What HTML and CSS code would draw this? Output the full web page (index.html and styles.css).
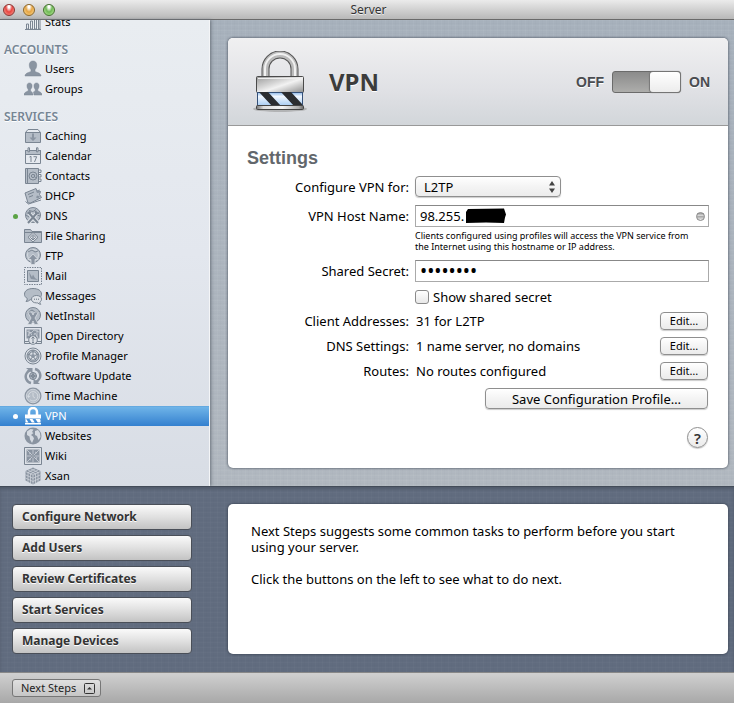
FILE: index.html
```html
<!DOCTYPE html>
<html lang="en">
<head>
    <meta charset="UTF-8">
    <meta name="viewport" content="width=device-width, initial-scale=1.0">
    <title>Server</title>
    <link rel="stylesheet" href="styles.css">
</head>
<body>
    <header class="titlebar">
        <div class="lights">
            <button class="light red" type="button" aria-label="Close"></button>
            <button class="light yellow" type="button" aria-label="Minimize"></button>
            <button class="light green" type="button" aria-label="Zoom"></button>
        </div>
        <h1>Server</h1>
    </header>

    <div class="main">
        <nav class="sidebar">
            <a class="item" href="#"><svg class="icon" viewBox="0 0 18 18"><path d="M1 16.5h16M2.500 16v-5h2v5zM6.500 16V8h2v8zM10.500 16V5h2v11zM14.500 16V2h1.500v14z"/></svg>Stats</a>
            <h2>ACCOUNTS</h2>
            <a class="item" href="#"><svg class="icon solid" viewBox="0 0 18 18"><path d="M9 1C6.500 1 5.200 2.700 5.300 5c0 2 .7 3.700 1.700 4.700v1.500c-.6 1.200-6 1.400-6 4.800h16c0-3.400-5.400-3.600-6-4.800V9.700c1-1 1.700-2.700 1.700-4.700C12.800 2.700 11.500 1 9 1z"/></svg>Users</a>
            <a class="item" href="#"><svg class="icon solid" viewBox="0 0 18 18"><path d="M5.500 3C3.700 3 3 4.300 3 6c0 1.500.5 2.500 1.200 3.200v1.500C3.700 11.600 0 11.800 0 15h9c0-2-1-3-2-3.600-.3-.3-.4-.5-.4-.7V9.200C7.500 8.500 8 7.500 8 6c0-1.700-.7-3-2.500-3z"/><path d="M12.500 3C10.700 3 10 4.300 10 6c0 1.500.5 2.500 1.200 3.200v1.500c-.2.500-1.200.8-1.700 1.200 0 .8.500 1.400.5 3.100h8c0-3.200-3.700-3.400-4.200-4.300V9.200C14.500 8.500 15 7.500 15 6c0-1.700-.7-3-2.500-3z"/></svg>Groups</a>
            <h2>SERVICES</h2>
            <a class="item" href="#"><svg class="icon" viewBox="0 0 18 18"><path class="fill" d="M1.500 5.500h15v10h-15z"/><path d="M1.500 5.500l2.500-3h10l2.500 3"/><path class="dark" d="M8 6.500h2v4h2.500L9 14l-3.500-3.500H8z"/></svg>Caching</a>
            <a class="item" href="#"><svg class="icon" viewBox="0 0 18 18"><path class="fill" d="M1.500 3.500h15v4h-15z"/><path d="M1.500 3.500h15v13h-15zM1.500 7.500h15"/><path class="paper" d="M4 .8h1.500v4H4zM12.500.8H14v4h-1.500z"/><path d="M5.500 10l1.500-.7V15M9.500 9.700h3.200L10.500 15"/></svg>Calendar</a>
            <a class="item" href="#"><svg class="icon" viewBox="0 0 18 18"><path class="fill" d="M1.500 1.500h13v15h-13z"/><path d="M3.500 1.500v15M14.500 3H17v2.500h-2.500M14.500 7.500H17V10h-2.500M14.500 12H17v2.500h-2.500"/><circle cx="9" cy="9" r="4"/><circle cx="9" cy="9" r="1.600"/><path d="M10.600 7.500v2.500q1 1.300 2.200 0"/></svg>Contacts</a>
            <a class="item" href="#"><svg class="icon" viewBox="0 0 18 18"><path class="fill" d="M1 6l11-4.500 1.500 3.500 3-.5-1 3 2 3-11 5.500H4z"/><path d="M1.500 14.500l3 2.500L17 13"/><path class="dark" d="M12 3.500l4-1-1 3-2 .5zM13 8.500l3 1-2 2-2-1z"/><path d="M4 7.500l6-2.500M5 10l4-1.500"/></svg>DHCP</a>
            <a class="item" href="#"><span class="dot"></span><svg class="icon" viewBox="0 0 18 18"><circle class="fill" cx="9" cy="8" r="7.500"/><path d="M5 3.500l4 1 3-2M2 8l3 2M13 8l3 1"/><path class="tool halo" d="M4 16l9-10M14 16L5 6"/><path class="tool" d="M4 16l9-10M14 16L5 6"/><path class="tool" d="M3.500 5.500l2 .8.800-2M11.500 4l.8 2.500 2.500-.5"/></svg>DNS</a>
            <a class="item" href="#"><svg class="icon" viewBox="0 0 18 18"><path class="fill" d="M.5 15.500v-13h6l1.500 2h9.500v11z"/><path d="M.5 5.500h17"/><path class="paper" d="M9 5.500l5 4.800-5 4.700-5-4.700z"/><path d="M9 7.500l2.700 2.800L9 13l-2.700-2.700z"/><path class="dark" d="M8.300 8.500h1.400V12H8.300z"/></svg>File Sharing</a>
            <a class="item" href="#"><svg class="icon" viewBox="0 0 18 18"><circle class="fill" cx="9" cy="8" r="7.500"/><circle class="edge" cx="9" cy="8" r="5.500"/><path d="M4 5l4-2 3 2 3-1"/><path class="dark edge" d="M7 17.500v-5H4L9 7l5 5.500h-3v5z"/></svg>FTP</a>
            <a class="item" href="#"><svg class="icon" viewBox="0 0 18 18"><path class="stamp" d="M.5.5h17v17H.5z"/><path class="fill" d="M3.500 3.500h11v11h-11z"/><path class="dark" d="M5 5l3 5 1-2.500 2 3.500 3 2-7-1-1-2z"/></svg>Mail</a>
            <a class="item" href="#"><svg class="icon" viewBox="0 0 18 18"><path class="fill" d="M9 1.500c5 0 8.500 2.200 8.500 5.700S14 13 9 13c-1 0-2-.1-2.800-.3Q4.500 14.500 2 14.500q1.500-1.500 1.300-3C1.500 10.500.5 9 .5 7.200.5 3.700 4 1.500 9 1.500z"/><path class="paper" d="M12.500 8.500c3 0 5 1.500 5 3.700 0 1.300-.7 2.300-1.700 2.900q0 1.200 1 2.200-2 0-3-1.400h-1.300c-3 0-5-1.500-5-3.700s2-3.700 5-3.700z"/><path class="dots" d="M10 12.200h1M12 12.200h1M14 12.200h1"/></svg>Messages</a>
            <a class="item" href="#"><svg class="icon" viewBox="0 0 18 18"><circle class="fill" cx="9" cy="8" r="7.500"/><path d="M3 6l5-3 3 2 4 0"/><path class="dark edge" d="M3.500 5h4L9 8l1.500-3h4L11 11l3.500 6.500h-4L9 14l-1.500 3.500h-4L7 11z"/></svg>NetInstall</a>
            <a class="item" href="#"><svg class="icon" viewBox="0 0 18 18"><path d="M.5.5h17v16H.5zM.5 14.500h17"/><path class="dark" d="M2.500 2.500h13v9h-13z"/><path class="scratch" d="M3 4l4 2 3-3 5 2M4 9l2-4 3 5 2-4 3 5M13 3v7M5 3v6"/><circle class="paper" cx="9" cy="13" r="4.300"/><path d="M9 10.200v4.600M7.500 11.500L9 10l1.500 1.500M8 15.500h2"/></svg>Open Directory</a>
            <a class="item" href="#"><svg class="icon" viewBox="0 0 18 18"><circle cx="9" cy="9" r="8"/><circle class="fill" cx="9" cy="9" r="6"/><circle class="paper" cx="9" cy="9" r="4.200"/><circle class="dark" cx="9" cy="9" r="2"/><path d="M9 3v4M4 7l3 1.500M14 7l-3 1.500M5.500 14L8 10.500M12.500 14L10 10.500"/></svg>Profile Manager</a>
            <a class="item" href="#"><svg class="icon" viewBox="0 0 18 18"><path class="ring" d="M7 16C2.500 15 .5 10 2.500 6.500 3.500 4.700 5 3.500 6 3.200M11 2c4.500 1 6.500 6 4.500 9.500-1 1.800-2.500 3-3.500 3.300"/><path class="dark" d="M2 1h6.500v5.500L6.500 4.700zM16 17H9.500v-5.500l2 1.800z"/><circle class="fill" cx="9" cy="9" r="3.500"/><circle cx="9" cy="9" r="1.500"/><path d="M9 5.500v7M5.500 9h7"/></svg>Software Update</a>
            <a class="item" href="#"><svg class="icon" viewBox="0 0 18 18"><circle class="dark" cx="9" cy="9" r="8.500"/><circle class="fill edge" cx="9" cy="9" r="6.800"/><path class="edge" d="M4.500 10a4.700 4.700 0 1 1 1.500 2.800M3.200 8.500l1.400 2 1.700-1.700M9 6v3.500l2 1.500"/></svg>Time Machine</a>
            <a class="item active" href="#"><span class="dot"></span><svg class="icon" viewBox="0 0 18 18"><path class="shackle" d="M5 8V5a4 4 0 0 1 8 0v3"/><path class="white" d="M1 7.500h16v4H1zM1 16h16v1.500H1zM1.500 12v3.500h3L2.200 12zM5.500 12l2.300 3.500h3L8.500 12zM11.500 12l2.300 3.500h2.700V13l-.7-1z"/></svg>VPN</a>
            <a class="item" href="#"><svg class="icon" viewBox="0 0 18 18"><circle class="dark" cx="9" cy="9" r="8.500"/><path class="land" d="M3 4.500L6.500 2l3 .5L8 5l1.500 1L7 8l2 1.500 1 2-2 4.500-2-3.500-.5-3L3 8zM11 4l3-1 2 3 .5 4-2 3-1.500-4-2-1z"/></svg>Websites</a>
            <a class="item" href="#"><svg class="icon" viewBox="0 0 18 18"><path class="paper" d="M.5.500h17v17H.5z"/><path class="dark" d="M2.500 2.500h13v13h-13z"/><path class="scratch" d="M3 3l12 12M15 3L3 15M9 3v12M3 9h12M5 7l2-1M11 5l2 1M5 12l2 1M12 12l1-2"/><circle class="paper" cx="9" cy="9" r="1.200"/></svg>Wiki</a>
            <a class="item" href="#"><svg class="icon" viewBox="0 0 18 18"><path class="dark" d="M9 .500L16.500 4v9.500L9 17.500l-7.500-4V4z"/><path class="scratch" d="M1.500 4.500L9 8l7.500-3.500M1.500 7.800L9 11.300l7.500-3.500M1.500 11L9 14.500l7.500-3.500M9 8v9.500M4 5v10M6.500 6.500v10M11.500 6.500v10M14 5v10M4 3l7.500 4M6.500 1.700L14 5.500M14 3L6.500 7M11.500 1.700L4 5.500"/></svg>Xsan</a>
        </nav>

        <main class="content">
            <section class="card">
                <div class="card-header">
                    <svg class="lock" viewBox="0 0 56 62">
                        <defs>
                            <linearGradient id="steel" x1="0" y1="0" x2="1" y2="0">
                                <stop offset="0" stop-color="#777"/>
                                <stop offset=".15" stop-color="#ddd"/>
                                <stop offset=".55" stop-color="#f4f4f4"/>
                                <stop offset=".9" stop-color="#aaa"/>
                                <stop offset="1" stop-color="#666"/>
                            </linearGradient>
                            <linearGradient id="body" x1="0" y1="0" x2="1" y2="1">
                                <stop offset="0" stop-color="#999"/>
                                <stop offset=".4" stop-color="#d8d8d8"/>
                                <stop offset=".55" stop-color="#f2f2f2"/>
                                <stop offset="1" stop-color="#8e8e8e"/>
                            </linearGradient>
                            <linearGradient id="glass" x1="0" y1="0" x2="0" y2="1">
                                <stop offset="0" stop-color="#8db8e8"/>
                                <stop offset=".3" stop-color="#f2f8ff"/>
                                <stop offset="1" stop-color="#a9cdf3"/>
                            </linearGradient>
                        </defs>
                        <ellipse cx="28" cy="58" rx="27" ry="3" fill="#999" opacity=".6"/>
                        <path d="M13.500 27V18a14.500 14.500 0 0 1 29 0v9" fill="none" stroke="#555" stroke-width="8"/>
                        <path d="M13.500 27V18a14.500 14.500 0 0 1 29 0v9" fill="none" stroke="#bbb" stroke-width="6"/>
                        <path d="M13 27V18a15 15 0 0 1 30 0v9" fill="none" stroke="#f1f1f1" stroke-width="2"/>
                        <rect x="4.500" y="25.500" width="47" height="16" rx="1" fill="url(#body)" stroke="#4a4a4a"/>
                        <path d="M6 27.500h44" stroke="#eee"/>
                        <rect x="5.500" y="41.500" width="45" height="13" fill="url(#glass)" stroke="#345078"/>
                        <path d="M7 41h9l13 14h-9zM29 41h10l11 12v2h-8z" fill="#2b2d30"/>
                        <rect x="4.500" y="54.500" width="47" height="4" rx="1" fill="url(#steel)" stroke="#444"/>
                    </svg>
                    <h2>VPN</h2>
                    <label class="switch">
                        <span>OFF</span>
                        <input type="checkbox" role="switch" aria-label="VPN" checked>
                        <span>ON</span>
                    </label>
                </div>

                <form class="card-body">
                    <h3>Settings</h3>
                    <div class="fields">
                        <label for="protocol">Configure VPN for:</label>
                        <div class="select">
                            <select id="protocol">
                                <option>L2TP</option>
                            </select>
                            <svg class="arrows" viewBox="0 0 6 12"><path d="M3 0l3 4.500H0zM3 12l3-4.500H0z"/></svg>
                        </div>

                        <label for="host">VPN Host Name:</label>
                        <div>
                            <div class="host">
                                <input id="host" type="text" value="98.255.">
                                <svg class="redacted" viewBox="0 0 40 16"><path d="M2 1l36-.5 2 6-1 3-1 5.500-18-.5-20 .5V4z"/></svg>
                                <span class="status"></span>
                            </div>
                            <p class="note">Clients configured using profiles will access the VPN service from the Internet using this hostname or IP address.</p>
                        </div>

                        <label for="secret">Shared Secret:</label>
                        <input id="secret" type="password" value="password">

                        <label class="check"><input type="checkbox">Show shared secret</label>

                        <span class="name">Client Addresses:</span>
                        <div class="value">31 for L2TP <button class="btn small" type="button">Edit…</button></div>

                        <span class="name">DNS Settings:</span>
                        <div class="value">1 name server, no domains <button class="btn small" type="button">Edit…</button></div>

                        <span class="name">Routes:</span>
                        <div class="value">No routes configured <button class="btn small" type="button">Edit…</button></div>
                    </div>
                    <div class="actions">
                        <button class="btn save" type="button">Save Configuration Profile…</button>
                        <button class="btn help" type="button" aria-label="Help">?</button>
                    </div>
                </form>
            </section>
        </main>
    </div>

    <section class="steps">
        <div class="step-list">
            <button type="button">Configure Network</button>
            <button type="button">Add Users</button>
            <button type="button">Review Certificates</button>
            <button type="button">Start Services</button>
            <button type="button">Manage Devices</button>
        </div>
        <div class="step-text">
            <p>Next Steps suggests some common tasks to perform before you start using your server.</p>
            <p>Click the buttons on the left to see what to do next.</p>
        </div>
    </section>

    <footer class="footer">
        <button class="toggle" type="button">Next Steps
            <svg viewBox="0 0 11 11"><rect x=".5" y=".5" width="10" height="10" rx="1"/><path d="M3 6.500L5.500 4 8 6.500z"/></svg>
        </button>
    </footer>
</body>
</html>
```
FILE: styles.css
```css
* {
    box-sizing: border-box;
}
body {
    margin: 0;
    height: 100vh;
    display: flex;
    flex-direction: column;
    overflow: hidden;
    font-family: "Lucida Grande", "Noto Sans", sans-serif;
    font-size: 13px;
    line-height: 16px;
    color: #000;
}
h1, h2, h3, p {
    margin: 0;
}
button, input, select {
    font: inherit;
    color: inherit;
    margin: 0;
}

/* title bar */
.titlebar {
    display: grid;
    grid-template-columns: 1fr auto 1fr;
    align-items: center;
    height: 20px;
    padding-left: 3px;
    background: linear-gradient(#ebebeb, #b8b8b8);
    border-bottom: 1px solid #6a6a6a;
    flex: none;
}
.titlebar h1 {
    grid-column: 2;
    font-size: 12px;
    line-height: 18px;
    font-weight: normal;
    color: #333;
    text-shadow: 0 1px #eee;
}
.lights {
    display: flex;
    gap: 8px;
}
.light {
    width: 12px;
    height: 12px;
    padding: 0;
    border: 1px solid #666;
    border-radius: 50%;
}
.red {
    background: radial-gradient(ellipse at 50% 15%, #fff 0 12%, #e8453f 45%, #fba79c 100%);
    border-color: #8c3431;
}
.yellow {
    background: radial-gradient(ellipse at 50% 15%, #fff 0 12%, #e5a443 45%, #ffe09a 100%);
    border-color: #8d6729;
}
.green {
    background: radial-gradient(ellipse at 50% 15%, #fff 0 12%, #6fb755 45%, #c3f3a5 100%);
    border-color: #44702f;
}

/* sidebar */
.main {
    display: flex;
    flex: 1;
    min-height: 0;
    background:
        repeating-linear-gradient(90deg, rgba(255,255,255,.04) 0 1px, transparent 1px 3px, rgba(0,0,0,.01) 3px 4px, transparent 4px 7px),
        repeating-linear-gradient(rgba(255,255,255,.04) 0 1px, transparent 1px 3px, rgba(0,0,0,.01) 3px 4px, transparent 4px 5px),
        linear-gradient(#a7b1bc, #b1b8c0);
}
.sidebar {
    width: 210px;
    flex: none;
    display: flex;
    flex-direction: column;
    justify-content: flex-end;
    overflow: hidden;
    background: linear-gradient(#e9edf1, #e3e7ee 50%, #d8dde5);
    border-right: 1px solid #f4f5f7;
    box-shadow: 1px 0 3px #69717b;
    font-size: 11px;
}
.sidebar h2 {
    padding: 8px 4px 0;
    font-size: 12px;
    line-height: 19px;
    font-weight: 600;
    color: #758594;
    text-shadow: 0 1px #fff;
}
.item {
    display: flex;
    align-items: center;
    flex: none;
    height: 20px;
    padding-left: 24px;
    gap: 3px;
    color: #000;
    text-decoration: none;
    position: relative;
}
.item.active {
    color: #fff;
    background: linear-gradient(#5a9fd9, #6fb4e8 5%, #3480cf);
}
.dot {
    position: absolute;
    left: 13px;
    width: 5px;
    height: 5px;
    border-radius: 50%;
    background: #5ba345;
}
.active .dot {
    background: #fff;
}
.icon {
    width: 18px;
    height: 18px;
    flex: none;
    fill: none;
    stroke: #7a8592;
    stroke-width: 1;
}
.icon.solid {
    fill: #8994a1;
    stroke: #7a8592;
    stroke-width: .5;
}
.icon .fill {
    fill: #b5bdc7;
}
.icon .paper {
    fill: #dde1e7;
}
.icon .dark {
    fill: #8a94a1;
    stroke: none;
}
.icon .dark.edge, .icon .edge {
    stroke: #e1e5ea;
    stroke-width: .7;
}
.icon .stamp {
    stroke-dasharray: 1.500 1;
}
.icon .tool {
    stroke-width: 2;
}
.icon .halo {
    stroke: #e1e5ea;
    stroke-width: 4;
}
.icon .ring {
    stroke: #8a94a1;
    stroke-width: 2.500;
}
.icon .scratch {
    stroke: #d5dae1;
    stroke-width: .7;
}
.icon .dots {
    stroke: #66717e;
}
.icon .land {
    fill: #d6dbe2;
    stroke: none;
}
.icon .shackle {
    stroke: #fff;
    stroke-width: 2.500;
}
.icon .white {
    fill: #fff;
    stroke: none;
}

/* service card */
.content {
    flex: 1;
    min-width: 0;
    display: flex;
    padding: 18px 6px 18px 18px;
}
.card {
    flex: 1;
    background: #fff;
    border-radius: 5px;
    box-shadow: 0 0 3px #39424f;
}
.card-header {
    display: flex;
    align-items: center;
    height: 88px;
    padding: 0 18px 0 24px;
    background: linear-gradient(#f0f0f1, #e0e1e5 60%, #d2d6da);
    border-bottom: 1px solid #999;
    border-radius: 5px 5px 0 0;
}
.lock {
    width: 56px;
    height: 62px;
}
.card-header h2 {
    margin-left: 21px;
    font-size: 24px;
    line-height: 32px;
    color: #3c3c3c;
    text-shadow: 0 1px #fff;
}
.switch {
    display: flex;
    align-items: center;
    gap: 8px;
    margin-left: auto;
    font: bold 14px/16px "Helvetica Neue", "Liberation Sans", sans-serif;
    color: #4a4c50;
    text-shadow: 0 1px #fff;
}
.switch input {
    appearance: none;
    display: flex;
    width: 69px;
    height: 22px;
    border: 1px solid #6b6b6b;
    border-radius: 3px;
    background: linear-gradient(#8b8b8b, #adadab);
}
.switch input::before {
    content: "";
    width: 30px;
    border-radius: 3px;
    background: linear-gradient(#fff, #ececec);
    box-shadow: 0 0 1px 1px #777;
}
.switch input:checked::before {
    margin-left: auto;
}

/* settings form */
.card-body {
    padding: 22px 19px;
}
.card-body h3 {
    margin-bottom: 8px;
    font: bold 18px/20px "Helvetica Neue", "Liberation Sans", sans-serif;
    color: #62676c;
}
.fields {
    display: grid;
    grid-template-columns: 162px 1fr;
    gap: 7px 6px;
}
.fields > label, .name {
    text-align: right;
    line-height: 22px;
}
.fields .check {
    grid-column: 2;
    display: flex;
    align-items: center;
    gap: 4px;
    height: 16px;
}
.check input {
    appearance: none;
    width: 14px;
    height: 14px;
    border: 1px solid #8a8a8a;
    border-radius: 3px;
    background: linear-gradient(#fff, #e8e8e8);
}
.select {
    position: relative;
    width: 146px;
}
.select select {
    appearance: none;
    display: block;
    width: 100%;
    height: 21px;
    padding: 0 8px;
    border: 1px solid #8f8f8f;
    border-radius: 4px;
    background: linear-gradient(#fff, #f4f4f4 50%, #ececec);
    box-shadow: 0 1px 1px #ccc;
}
.arrows {
    position: absolute;
    right: 6px;
    top: 5px;
    width: 6px;
    height: 12px;
    fill: #444;
}
.host {
    position: relative;
}
.host input, #secret {
    display: block;
    width: 100%;
    height: 22px;
    padding: 0 4px;
    border: 1px solid #aaa;
    border-top-color: #888;
    border-radius: 0;
    background: #fff;
}
#secret {
    font-size: 19px;
}
.redacted {
    position: absolute;
    left: 51px;
    top: 3px;
    width: 40px;
    height: 16px;
}
.status {
    position: absolute;
    right: 4px;
    top: 7px;
    width: 9px;
    height: 9px;
    border: 1px solid #888;
    border-radius: 50%;
    background: linear-gradient(#999, #ddd 40%, #aaa 50%, #eee);
}
.note {
    padding: 3px 8px 1px 0;
    font-size: 9px;
    line-height: 11px;
}
.fields .name, .value {
    height: 18px;
    line-height: 18px;
}
.value {
    display: flex;
    justify-content: space-between;
    padding: 0 1px;
}
.btn {
    padding: 0;
    border: 1px solid #8f8f8f;
    border-radius: 4px;
    background: linear-gradient(#fff, #f4f4f4 50%, #ebebeb);
    box-shadow: 0 1px 1px #ccc;
}
.small {
    width: 48px;
    height: 18px;
    font-size: 11px;
    line-height: 14px;
}
.actions {
    display: flex;
    flex-direction: column;
    align-items: flex-end;
    gap: 18px;
    padding: 8px 1px 0 0;
}
.save {
    width: 223px;
    height: 21px;
    line-height: 18px;
}
.help {
    width: 21px;
    height: 21px;
    border-radius: 50%;
    font-size: 15px;
    line-height: 18px;
    font-weight: 600;
    color: #333;
}

/* next steps */
.steps {
    display: flex;
    flex: none;
    gap: 36px;
    padding: 17px 6px 18px 12px;
    border-top: 1px solid #434c59;
    background:
        repeating-linear-gradient(90deg, rgba(255,255,255,.02) 0 1px, transparent 1px 3px, rgba(0,0,0,.01) 3px 4px, transparent 4px 7px),
        repeating-linear-gradient(rgba(255,255,255,.02) 0 1px, transparent 1px 3px, rgba(0,0,0,.01) 3px 4px, transparent 4px 5px),
        #616c7f;
    box-shadow: inset 0 2px 3px #505a6a;
}
.step-list {
    display: flex;
    flex-direction: column;
    gap: 5px;
    width: 180px;
}
.step-list button {
    height: 26px;
    padding: 0 9px;
    border: 1px solid #4a4f58;
    border-radius: 4px;
    background: linear-gradient(#fafafa, #e0e0e0 50%, #c3c3c3);
    font-size: 12px;
    font-weight: bold;
    text-align: left;
    color: #333;
    text-shadow: 0 1px #fff;
}
.step-text {
    flex: 1;
    padding: 19px 23px;
    background: #fff;
    border-radius: 5px;
    box-shadow: 0 0 3px #2f3846;
}
.step-text p {
    margin-bottom: 16px;
}
.footer {
    flex: none;
    padding: 6px 12px;
    border-top: 1px solid #888;
    background: linear-gradient(#d0d0d0, #a8a8a8);
}
.toggle {
    display: flex;
    align-items: center;
    gap: 8px;
    height: 18px;
    padding: 0 5px 0 8px;
    border: 1px solid #777;
    border-radius: 3px;
    background: linear-gradient(#e0e0e0, #c6c6c6);
    font-size: 11px;
    color: #222;
}
.toggle svg {
    width: 11px;
    height: 11px;
    fill: none;
    stroke: #333;
}
.toggle path {
    fill: #333;
    stroke: none;
}
```
